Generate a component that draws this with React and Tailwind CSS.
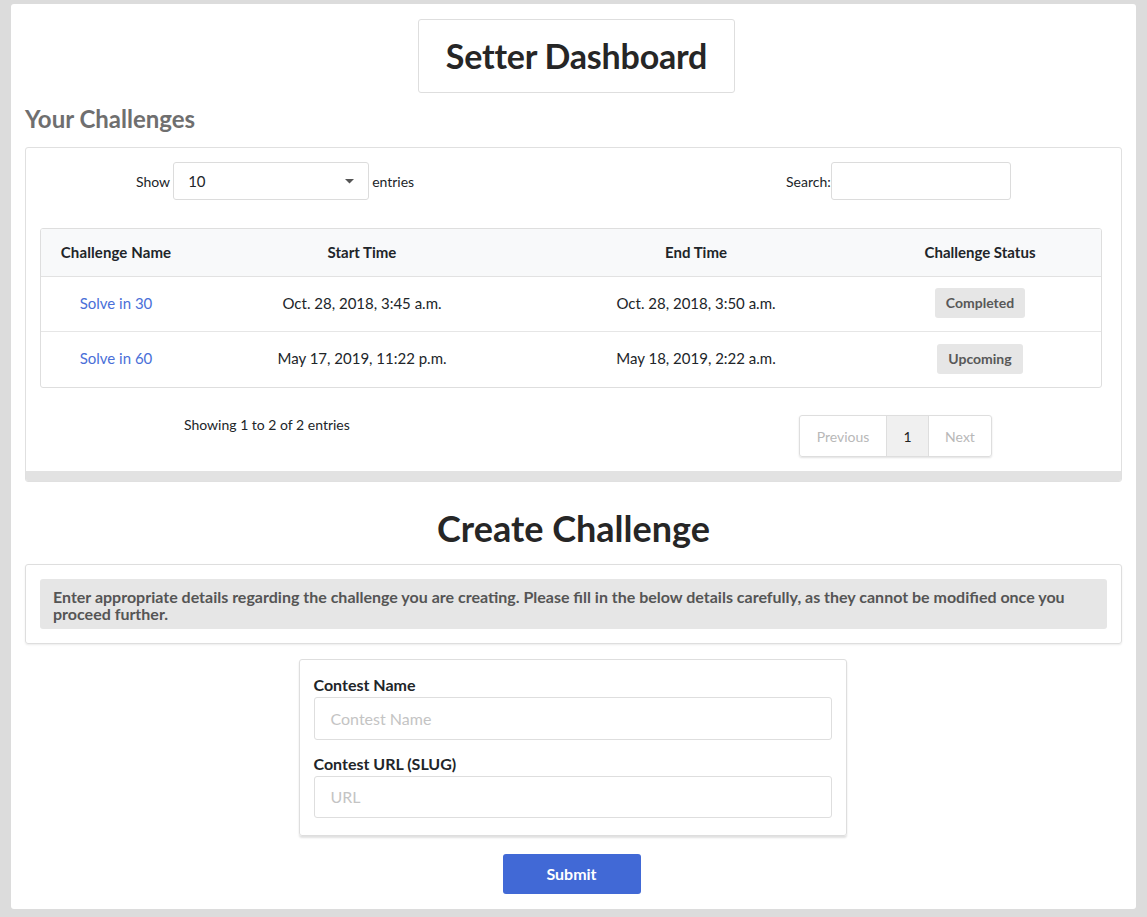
const rows = [
  { name: 'Solve in 30', start: 'Oct. 28, 2018, 3:45 a.m.', end: 'Oct. 28, 2018, 3:50 a.m.', status: 'Completed' },
  { name: 'Solve in 60', start: 'May 17, 2019, 11:22 p.m.', end: 'May 18, 2019, 2:22 a.m.', status: 'Upcoming' },
];

const App = () => {
  return (
    <div className="min-h-[917px] bg-[#dcdcdc] px-[11px] pt-[4px] pb-[8px] font-['Lato','Open_Sans',sans-serif] text-[#212529]">
      <div className="bg-white rounded-[3px] px-[14px] pt-[15px] pb-[15px]">
        {/* header */}
        <div className="flex justify-center">
          <div className="w-[317px] h-[74px] ml-[6px] border border-[#dedede] rounded-[3px] flex items-center justify-center">
            <h1 className="text-[34px] font-bold text-[#262626] tracking-[-0.2px] mt-[-2px]">Setter Dashboard</h1>
          </div>
        </div>

        <h2 className="text-[24px] font-bold text-[#6f6f6f] leading-[32px] mt-[10px]">Your Challenges</h2>

        {/* challenges table card */}
        <div className="mt-[12px] border border-[#e0e0e0] rounded-[3px] overflow-hidden">
          <div className="pl-[14px] pr-[19px] pt-[14px] pb-[14px]">
            <div className="flex items-center h-[38px] text-[14px]">
              <div className="w-[746px] flex items-center gap-[3px] pl-[96px]">
                <span>Show</span>
                <div className="w-[196px] h-[38px] border border-[#dcdcdc] rounded-[3px] flex items-center justify-between pl-[14px] pr-[14px] text-[15px]">
                  <span>10</span>
                  <svg width="9" height="5" viewBox="0 0 9 5"><path d="M0 0h9L4.5 4.5z" fill="#555" /></svg>
                </div>
                <span>entries</span>
              </div>
              <div className="flex items-center">
                <span>Search:</span>
                <div className="w-[180px] h-[38px] border border-[#dcdcdc] rounded-[3px]" />
              </div>
            </div>

            <div className="mt-[28px] border border-[#dedede] rounded-[3px] overflow-hidden text-[15px]">
              <div className="flex h-[48px] items-center bg-[#f8f9fa] border-b border-[#e2e2e2] font-bold">
                <div className="w-[150px] text-center tracking-[0.1px]">Challenge Name</div>
                <div className="w-[342px] text-center">Start Time</div>
                <div className="w-[326px] text-center">End Time</div>
                <div className="flex-1 text-center">Challenge Status</div>
              </div>
              {rows.map((r, i) => (
                <div key={r.name} className={`flex h-[55px] items-center pb-[2px] ${i === 0 ? 'border-b border-[#e6e6e6]' : ''}`}>
                  <div className="w-[150px] text-center text-[#4a6fd8]">{r.name}</div>
                  <div className="w-[342px] text-center">{r.start}</div>
                  <div className="w-[326px] text-center">{r.end}</div>
                  <div className="flex-1 flex justify-center">
                    <span className="bg-[#e6e6e6] text-[#585858] font-bold text-[14px] rounded-[3px] px-[11px] leading-[30px]">{r.status}</span>
                  </div>
                </div>
              ))}
            </div>

            <div className="flex items-start mt-[27px] text-[14px]">
              <div className="w-[759px] pl-[144px] mt-[-1px]">Showing 1 to 2 of 2 entries</div>
              <div className="flex h-[42px] border border-[#dedede] rounded-[3px] shadow-[0_1px_2px_rgba(0,0,0,0.12)] overflow-hidden text-[14px]">
                <span className="w-[86px] flex items-center justify-center text-[#b8b8b8]">Previous</span>
                <span className="w-[43px] flex items-center justify-center bg-[#f0f0f0] border-x border-[#dedede] text-[#222]">1</span>
                <span className="w-[62px] flex items-center justify-center text-[#b8b8b8]">Next</span>
              </div>
            </div>
          </div>
          <div className="h-[10px] bg-[#e2e2e2]" />
        </div>

        <h2 className="mt-[24px] text-center text-[36px] font-bold text-[#262626] leading-[44px]">Create Challenge</h2>

        {/* info card */}
        <div className="mt-[14px] border border-[#dedede] rounded-[3px] shadow-[0_1px_2px_rgba(0,0,0,0.08)] px-[14px] pt-[14px] pb-[14px]">
          <div className="bg-[#e6e6e6] rounded-[3px] px-[13px] pt-[9px] pb-[7px] text-[16px] font-bold text-[#555] leading-[17px]">
            Enter appropriate details regarding the challenge you are creating. Please fill in the below details carefully, as they cannot be modified once you proceed further.
          </div>
        </div>

        {/* form card */}
        <div className="mt-[15px] flex justify-center">
          <div className="w-[548px] ml-[-2px] border border-[#dedede] rounded-[3px] shadow-[0_2px_2px_rgba(0,0,0,0.12)] px-[14px] pt-[16px] pb-[17px]">
            <label className="block text-[16px] font-bold leading-[18px]">Contest Name</label>
            <div className="mt-[3px] h-[43px] border border-[#dedede] rounded-[3px] flex items-center px-[16px] text-[16px] text-[#c4c4c4]">Contest Name</div>
            <label className="block mt-[15px] text-[16px] font-bold leading-[18px]">Contest URL (SLUG)</label>
            <div className="mt-[3px] h-[42px] border border-[#dedede] rounded-[3px] flex items-center px-[16px] text-[16px] text-[#c4c4c4]">URL</div>
          </div>
        </div>

        <div className="mt-[18px] flex justify-center">
          <button className="w-[138px] h-[40px] ml-[-4px] bg-[#4169d6] rounded-[3px] text-white font-bold text-[16px]">Submit</button>
        </div>
      </div>
    </div>
  );
};

export default App;
